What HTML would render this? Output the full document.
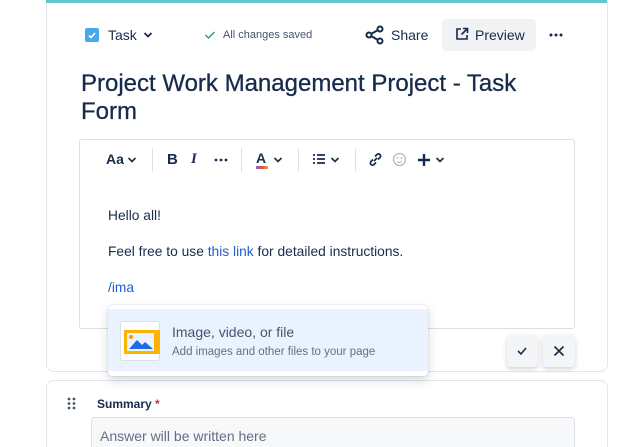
<!DOCTYPE html>
<html><head><style>
*{margin:0;padding:0;box-sizing:border-box}
html,body{width:633px;height:447px;overflow:hidden}
body{background:#fff;font-family:"Liberation Sans",sans-serif;color:#172b4d;position:relative}
.a{position:absolute}
</style></head><body>
<div class="a" style="left:46px;top:-10px;width:562px;height:382px;border:1px solid #e4e6ea;border-radius:8px;"></div>
<div class="a" style="left:46px;top:0;width:561px;height:3px;background:#62c6d3"></div>
<div class="a" style="left:46px;top:380px;width:562px;height:80px;border:1px solid #e4e6ea;border-radius:8px;"></div>

<div class="a" style="left:85px;top:28px;width:14px;height:14px;background:#4ca7e8;border-radius:2px"></div>
<svg class="a" style="left:85px;top:28px" width="14" height="14"><path d="M4 7.5l2 2 4-4.5" stroke="#fff" stroke-width="1.6" fill="none"/></svg>
<div class="a" style="left:108px;top:27px;font-size:14px">Task</div>
<svg class="a" style="left:143px;top:31px" width="10" height="8"><path d="M1.5 2l3.5 3.5L8.5 2" stroke="#172b4d" stroke-width="1.8" fill="none"/></svg>
<svg class="a" style="left:204px;top:30px" width="12" height="10"><path d="M1.5 5l3 3 6-6" stroke="#22a06b" stroke-width="1.4" fill="none"/></svg>
<div class="a" style="left:223px;top:29px;font-size:11px;color:#44546f">All changes saved</div>

<svg class="a" style="left:365px;top:25px" width="20" height="20"><circle cx="4" cy="10" r="2.5" stroke="#172b4d" stroke-width="2" fill="none"/><circle cx="15" cy="4" r="2.5" stroke="#172b4d" stroke-width="2" fill="none"/><circle cx="15" cy="16" r="2.5" stroke="#172b4d" stroke-width="2" fill="none"/><path d="M6 9l7-4M6 11l7 4" stroke="#172b4d" stroke-width="2"/></svg>
<div class="a" style="left:391px;top:27px;font-size:14px;color:#172b4d">Share</div>
<div class="a" style="left:442px;top:19px;width:94px;height:32px;background:#f1f2f4;border-radius:4px"></div>
<svg class="a" style="left:455px;top:27px" width="14" height="14"><path d="M6 2H2v10h10V8M8 1.5h4.5V6M12.5 1.5L6.5 7.5" stroke="#172b4d" stroke-width="1.6" fill="none"/></svg>
<div class="a" style="left:475px;top:27px;font-size:14px">Preview</div>
<svg class="a" style="left:549px;top:33px" width="14" height="4"><g fill="#172b4d"><circle cx="2" cy="2" r="1.5"/><circle cx="7" cy="2" r="1.5"/><circle cx="12" cy="2" r="1.5"/></g></svg>

<div class="a" style="left:81px;top:70px;font-size:24px;line-height:28px;width:450px;-webkit-text-stroke:0.3px #172b4d">Project Work Management Project - Task Form</div>

<div class="a" style="left:79px;top:139px;width:496px;height:190px;border:1px solid #dcdfe4;border-radius:3px"></div>
<div class="a" style="left:106px;top:151px;font-size:14px;font-weight:bold">Aa</div>
<svg class="a" style="left:127px;top:156px" width="10" height="8"><path d="M1.5 2l3.5 3.5L8.5 2" stroke="#172b4d" stroke-width="1.6" fill="none"/></svg>
<div class="a" style="left:152px;top:148px;width:1px;height:24px;background:#dcdfe4"></div>
<div class="a" style="left:167px;top:151px;font-size:15px;font-weight:bold">B</div>
<div class="a" style="left:191px;top:151px;font-size:15px;font-style:italic;font-family:'Liberation Serif',serif;font-weight:bold">I</div>
<svg class="a" style="left:214px;top:158px" width="14" height="4"><g fill="#172b4d"><circle cx="2" cy="2" r="1.4"/><circle cx="7" cy="2" r="1.4"/><circle cx="12" cy="2" r="1.4"/></g></svg>
<div class="a" style="left:241px;top:148px;width:1px;height:24px;background:#dcdfe4"></div>
<div class="a" style="left:256px;top:150px;font-size:14px;font-weight:bold">A</div>
<div class="a" style="left:256px;top:166px;width:12px;height:3px;background:linear-gradient(90deg,#8270db,#e2483d,#f5a623)"></div>
<svg class="a" style="left:273px;top:156px" width="10" height="8"><path d="M1.5 2l3.5 3.5L8.5 2" stroke="#172b4d" stroke-width="1.6" fill="none"/></svg>
<div class="a" style="left:298px;top:148px;width:1px;height:24px;background:#dcdfe4"></div>
<svg class="a" style="left:312px;top:153px" width="14" height="12"><path d="M1 2h2M1 6h2M1 10h2M5 2h8M5 6h8M5 10h8" stroke="#172b4d" stroke-width="1.8"/></svg>
<svg class="a" style="left:330px;top:156px" width="10" height="8"><path d="M1.5 2l3.5 3.5L8.5 2" stroke="#172b4d" stroke-width="1.6" fill="none"/></svg>
<div class="a" style="left:355px;top:148px;width:1px;height:24px;background:#dcdfe4"></div>
<svg class="a" style="left:368px;top:152px" width="15" height="15"><path d="M6 9l3-3M5 7.5L3 9.5a2 2 0 003 3l2-2M10 7.5l2-2a2 2 0 00-3-3l-2 2" stroke="#172b4d" stroke-width="1.7" fill="none"/></svg>
<svg class="a" style="left:392px;top:152px" width="15" height="15"><circle cx="7.5" cy="7.5" r="6" stroke="#b3b9c4" stroke-width="1.3" fill="none"/><circle cx="5.5" cy="6" r=".9" fill="#b3b9c4"/><circle cx="9.5" cy="6" r=".9" fill="#b3b9c4"/><path d="M5 9.5q2.5 2 5 0" stroke="#b3b9c4" stroke-width="1.1" fill="none"/></svg>
<svg class="a" style="left:417px;top:153px" width="14" height="14"><path d="M7 1v12M1 7h12" stroke="#172b4d" stroke-width="2.4"/></svg>
<svg class="a" style="left:435px;top:156px" width="10" height="8"><path d="M1.5 2l3.5 3.5L8.5 2" stroke="#172b4d" stroke-width="1.6" fill="none"/></svg>

<div class="a" style="left:108px;top:208px;font-size:13.8px">Hello all!</div>
<div class="a" style="left:108px;top:244px;font-size:13.8px">Feel free to use <span style="color:#1d5fd6">this link</span> for detailed instructions.</div>
<div class="a" style="left:108px;top:280px;font-size:13.8px;color:#1d5fd6">/ima</div>

<div class="a" style="left:507px;top:335px;width:31px;height:32px;background:#f4f5f7;border-radius:4px;box-shadow:0 2px 5px rgba(9,30,66,.2)"></div>
<svg class="a" style="left:516px;top:345px" width="12" height="12"><path d="M2 6l3 3 5-6" stroke="#172b4d" stroke-width="1.6" fill="none"/></svg>
<div class="a" style="left:543px;top:335px;width:32px;height:32px;background:#f4f5f7;border-radius:4px;box-shadow:0 2px 5px rgba(9,30,66,.2)"></div>
<svg class="a" style="left:553px;top:345px" width="12" height="12"><path d="M1.5 1.5l9 9M10.5 1.5l-9 9" stroke="#172b4d" stroke-width="1.6"/></svg>

<div class="a" style="left:108px;top:305px;width:320px;height:71px;background:#fff;border-radius:4px;box-shadow:0 4px 10px rgba(9,30,66,.18),0 0 1px rgba(9,30,66,.3)"></div>
<div class="a" style="left:108px;top:309px;width:320px;height:62px;background:#e9f2fe"></div>
<div class="a" style="left:120px;top:321px;width:40px;height:40px;background:#fff;border:1px solid #dcdfe4;border-radius:3px"></div>
<div class="a" style="left:124px;top:330px;width:36px;height:24px;background:#ffb300"></div>
<div class="a" style="left:127px;top:333px;width:27px;height:18px;background:#e9f2fe"></div>
<svg class="a" style="left:127px;top:333px" width="27" height="18"><circle cx="4" cy="4" r="2" fill="#f59e0b"/><path d="M2 16l8-9 5 5 3-3 8 7z" fill="#1d6ae5"/></svg>
<div class="a" style="left:172px;top:324px;font-size:14px;color:#44546f">Image, video, or file</div>
<div class="a" style="left:172px;top:346px;font-size:11.5px;color:#626f86">Add images and other files to your page</div>

<svg class="a" style="left:67px;top:397px" width="10" height="13"><g fill="#44546f"><circle cx="2" cy="2" r="1.4"/><circle cx="7" cy="2" r="1.4"/><circle cx="2" cy="6.5" r="1.4"/><circle cx="7" cy="6.5" r="1.4"/><circle cx="2" cy="11" r="1.4"/><circle cx="7" cy="11" r="1.4"/></g></svg>
<div class="a" style="left:97px;top:397px;font-size:12px;font-weight:bold">Summary <span style="color:#c9372c">*</span></div>
<div class="a" style="left:91px;top:417px;width:484px;height:40px;background:#f7f8f9;border:1px solid #dcdfe4;border-radius:3px"></div>
<div class="a" style="left:100px;top:428px;font-size:14px;color:#626f86">Answer will be written here</div>
</body></html>
